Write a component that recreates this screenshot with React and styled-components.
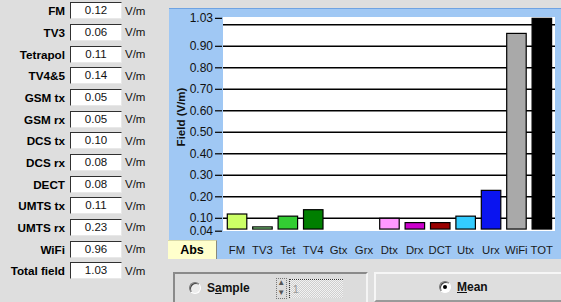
import React from 'react'
import styled, { createGlobalStyle } from 'styled-components'

const GlobalStyle = createGlobalStyle`
  body {
    margin: 0;
    background: #dedede;
    overflow: hidden;
    font-family: "Liberation Sans", Arial, sans-serif;
  }
`

const fields = [
  ['FM', '0.12'],
  ['TV3', '0.06'],
  ['Tetrapol', '0.11'],
  ['TV4&5', '0.14'],
  ['GSM tx', '0.05'],
  ['GSM rx', '0.05'],
  ['DCS tx', '0.10'],
  ['DCS rx', '0.08'],
  ['DECT', '0.08'],
  ['UMTS tx', '0.11'],
  ['UMTS rx', '0.23'],
  ['WiFi', '0.96'],
  ['Total field', '1.03'],
]

const bars = [
  { name: 'FM', value: 0.12, color: '#ccff66' },
  { name: 'TV3', value: 0.06, color: '#99ff99' },
  { name: 'Tet', value: 0.11, color: '#33cc33' },
  { name: 'TV4', value: 0.14, color: '#007f00' },
  { name: 'Gtx', value: 0.05, color: '#ffff00' },
  { name: 'Grx', value: 0.05, color: '#ff9900' },
  { name: 'Dtx', value: 0.10, color: '#ff99ff' },
  { name: 'Drx', value: 0.08, color: '#cc00cc' },
  { name: 'DCT', value: 0.08, color: '#990000' },
  { name: 'Utx', value: 0.11, color: '#33ccff' },
  { name: 'Urx', value: 0.23, color: '#0a14f0' },
  { name: 'WiFi', value: 0.96, color: '#a9a9a9' },
  { name: 'TOT', value: 1.03, color: '#000000' },
]

const ticks = ['1.03', '0.90', '0.80', '0.70', '0.60', '0.50', '0.40', '0.30', '0.20', '0.10', '0.04']
const grid = [1.0, 0.9, 0.8, 0.7, 0.6, 0.5, 0.4, 0.3, 0.2, 0.1]

// plot scale: 0.04 sits on the bottom edge, 1.03 on the top
const yOf = (v) => 231.2 - (v - 0.04) * 215

const Page = styled.div`
  display: flex;
  width: 561px;
  height: 302px;
  overflow: hidden;
`

const LeftPanel = styled.div`
  width: 169px;
  flex-shrink: 0;
  display: flex;
  flex-direction: column;
`

const FieldRow = styled.div`
  height: 21.67px;
  display: flex;
  align-items: center;
`

const FieldLabel = styled.div`
  width: 65px;
  text-align: right;
  font-size: 11.7px;
  font-weight: bold;
  color: #000;
  white-space: nowrap;
`

const ValueBox = styled.div`
  width: 50px;
  height: 15px;
  margin-left: 5px;
  background: #fff;
  border: 1px solid;
  border-color: #303030 #e8e8e8 #e8e8e8 #303030;
  font-size: 11.5px;
  line-height: 15px;
  text-align: center;
  color: #111;
`

const Unit = styled.div`
  margin-left: 3px;
  font-size: 11.5px;
  color: #111;
`

const RightPanel = styled.div`
  flex: 1;
  min-width: 0;
  padding-top: 8px;
  display: flex;
  flex-direction: column;
`

const ChartPanel = styled.div`
  height: 250px;
  background: #a0c8f4;
  border-top: 1px solid #6fa3e2;
  display: flex;
  flex-direction: column;
`

const ChartSvg = styled.svg`
  display: block;
  width: 392px;
  height: 231px;
`

const CategoryRow = styled.div`
  height: 19px;
  display: flex;
`

const AbsTab = styled.div`
  width: 48px;
  margin-left: -1px;
  background: #ffffcc;
  border-top: 1px solid #d8d8a8;
  border-right: 1px solid #8a8a7a;
  font-size: 12.5px;
  font-weight: bold;
  display: flex;
  align-items: center;
  justify-content: center;
`

const Categories = styled.div`
  margin-left: 7.3px;
  display: grid;
  grid-template-columns: repeat(13, 25.4px);
  align-items: center;
`

const Category = styled.div`
  font-size: 11.3px;
  color: #1a1a1a;
  white-space: nowrap;
  display: flex;
  justify-content: center;
`

const BottomRow = styled.div`
  display: flex;
  gap: 6px;
  margin-top: 13px;
  padding-left: 4px;
  height: 31px;
`

const SamplePanel = styled.div`
  box-sizing: border-box;
  flex: none;
  width: 195px;
  border-top: 2px solid #8a8a8a;
  border-left: 2px solid #8a8a8a;
  border-right: 2px solid #f4f4f4;
  background: #dcdcdc;
  display: flex;
  align-items: center;
  padding-left: 14px;
`

const MeanPanel = styled.div`
  box-sizing: border-box;
  flex: none;
  width: 200px;
  border-top: 2px solid #f6f6f6;
  border-left: 2px solid #f6f6f6;
  border-bottom: 2px solid #9a9a9a;
  background: #dedede;
  display: flex;
  align-items: center;
  padding-left: 63px;
`

const Radio = styled.span`
  position: relative;
  width: 10px;
  height: 10px;
  border-radius: 50%;
  background: ${(p) => (p.$disabled ? '#ececec' : '#fff')};
  border: 1px solid;
  border-color: #777 #fff #fff #777;
  box-shadow: inset 1px 1px 0 #444;
  flex-shrink: 0;

  &::after {
    content: '';
    display: ${(p) => (p.$checked ? 'block' : 'none')};
    position: absolute;
    left: 3px;
    top: 3px;
    width: 4px;
    height: 4px;
    border-radius: 50%;
    background: #000;
  }
`

const RadioLabel = styled.span`
  margin-left: 6px;
  font-size: 12px;
  font-weight: bold;
  color: #111;

  u {
    text-decoration-thickness: 1px;
  }
`

const Spinner = styled.div`
  margin-left: 26px;
  width: 9px;
  height: 19px;
  border: 1px dotted #777;
  display: flex;
  flex-direction: column;
  align-items: center;
  justify-content: space-around;
  font-size: 8px;
  line-height: 8px;
  color: #555;
`

const SpinInput = styled.div`
  margin-left: 2px;
  width: 50px;
  height: 18px;
  border-top: 1px dotted #333;
  border-left: 1px dotted #333;
  background: repeating-conic-gradient(#cfcfcf 0 25%, #f2f2f2 0 50%) 0 0 / 2px 2px;
  font-size: 11px;
  line-height: 18px;
  padding-left: 3px;
  color: #999;
`

function Chart() {
  const base = yOf(0.05)
  return (
    <ChartSvg viewBox="169 9 392 231">
      <rect x="223" y="17" width="332" height="214" fill="#fff" />
      {grid.map((v) => (
        <line key={v} x1="223" x2="555" y1={yOf(v)} y2={yOf(v)} stroke="#000" strokeWidth="1.4" />
      ))}
      {ticks.map((t) => (
        <g key={t}>
          <line x1="215" x2="222" y1={yOf(parseFloat(t))} y2={yOf(parseFloat(t))} stroke="#000" strokeWidth="1.2" />
          <text
            x="213"
            y={yOf(parseFloat(t)) + 4}
            textAnchor="end"
            fontSize="12"
            fontFamily="Liberation Sans, Arial, sans-serif"
            fill="#111"
          >
            {t}
          </text>
        </g>
      ))}
      <text
        x="181"
        y="117"
        transform="rotate(-90 181 117)"
        textAnchor="middle"
        dominantBaseline="central"
        fontSize="11.5"
        fontWeight="bold"
        fontFamily="Liberation Sans, Arial, sans-serif"
        fill="#111"
      >
        Field (V/m)
      </text>
      {bars.map((b, i) => {
        const top = yOf(b.value)
        const h = base - top
        if (h < 0.5) return null
        return (
          <rect
            key={b.name}
            x={227.3 + i * 25.4}
            y={top}
            width="19.5"
            height={h}
            fill={b.color}
            stroke="#000"
            strokeWidth="1.2"
          />
        )
      })}
    </ChartSvg>
  )
}

export default function App() {
  return (
    <>
      <GlobalStyle />
      <Page>
        <LeftPanel>
          {fields.map(([label, value]) => (
            <FieldRow key={label}>
              <FieldLabel>{label}</FieldLabel>
              <ValueBox>{value}</ValueBox>
              <Unit>V/m</Unit>
            </FieldRow>
          ))}
        </LeftPanel>
        <RightPanel>
          <ChartPanel>
            <Chart />
            <CategoryRow>
              <AbsTab>Abs</AbsTab>
              <Categories>
                {bars.map((b) => (
                  <Category key={b.name}>{b.name}</Category>
                ))}
              </Categories>
            </CategoryRow>
          </ChartPanel>
          <BottomRow>
            <SamplePanel>
              <Radio $disabled />
              <RadioLabel>
                S<u>a</u>mple
              </RadioLabel>
              <Spinner>
                <span>▲</span>
                <span>▼</span>
              </Spinner>
              <SpinInput>1</SpinInput>
            </SamplePanel>
            <MeanPanel>
              <Radio $checked />
              <RadioLabel>
                <u>M</u>ean
              </RadioLabel>
            </MeanPanel>
          </BottomRow>
        </RightPanel>
      </Page>
    </>
  )
}
